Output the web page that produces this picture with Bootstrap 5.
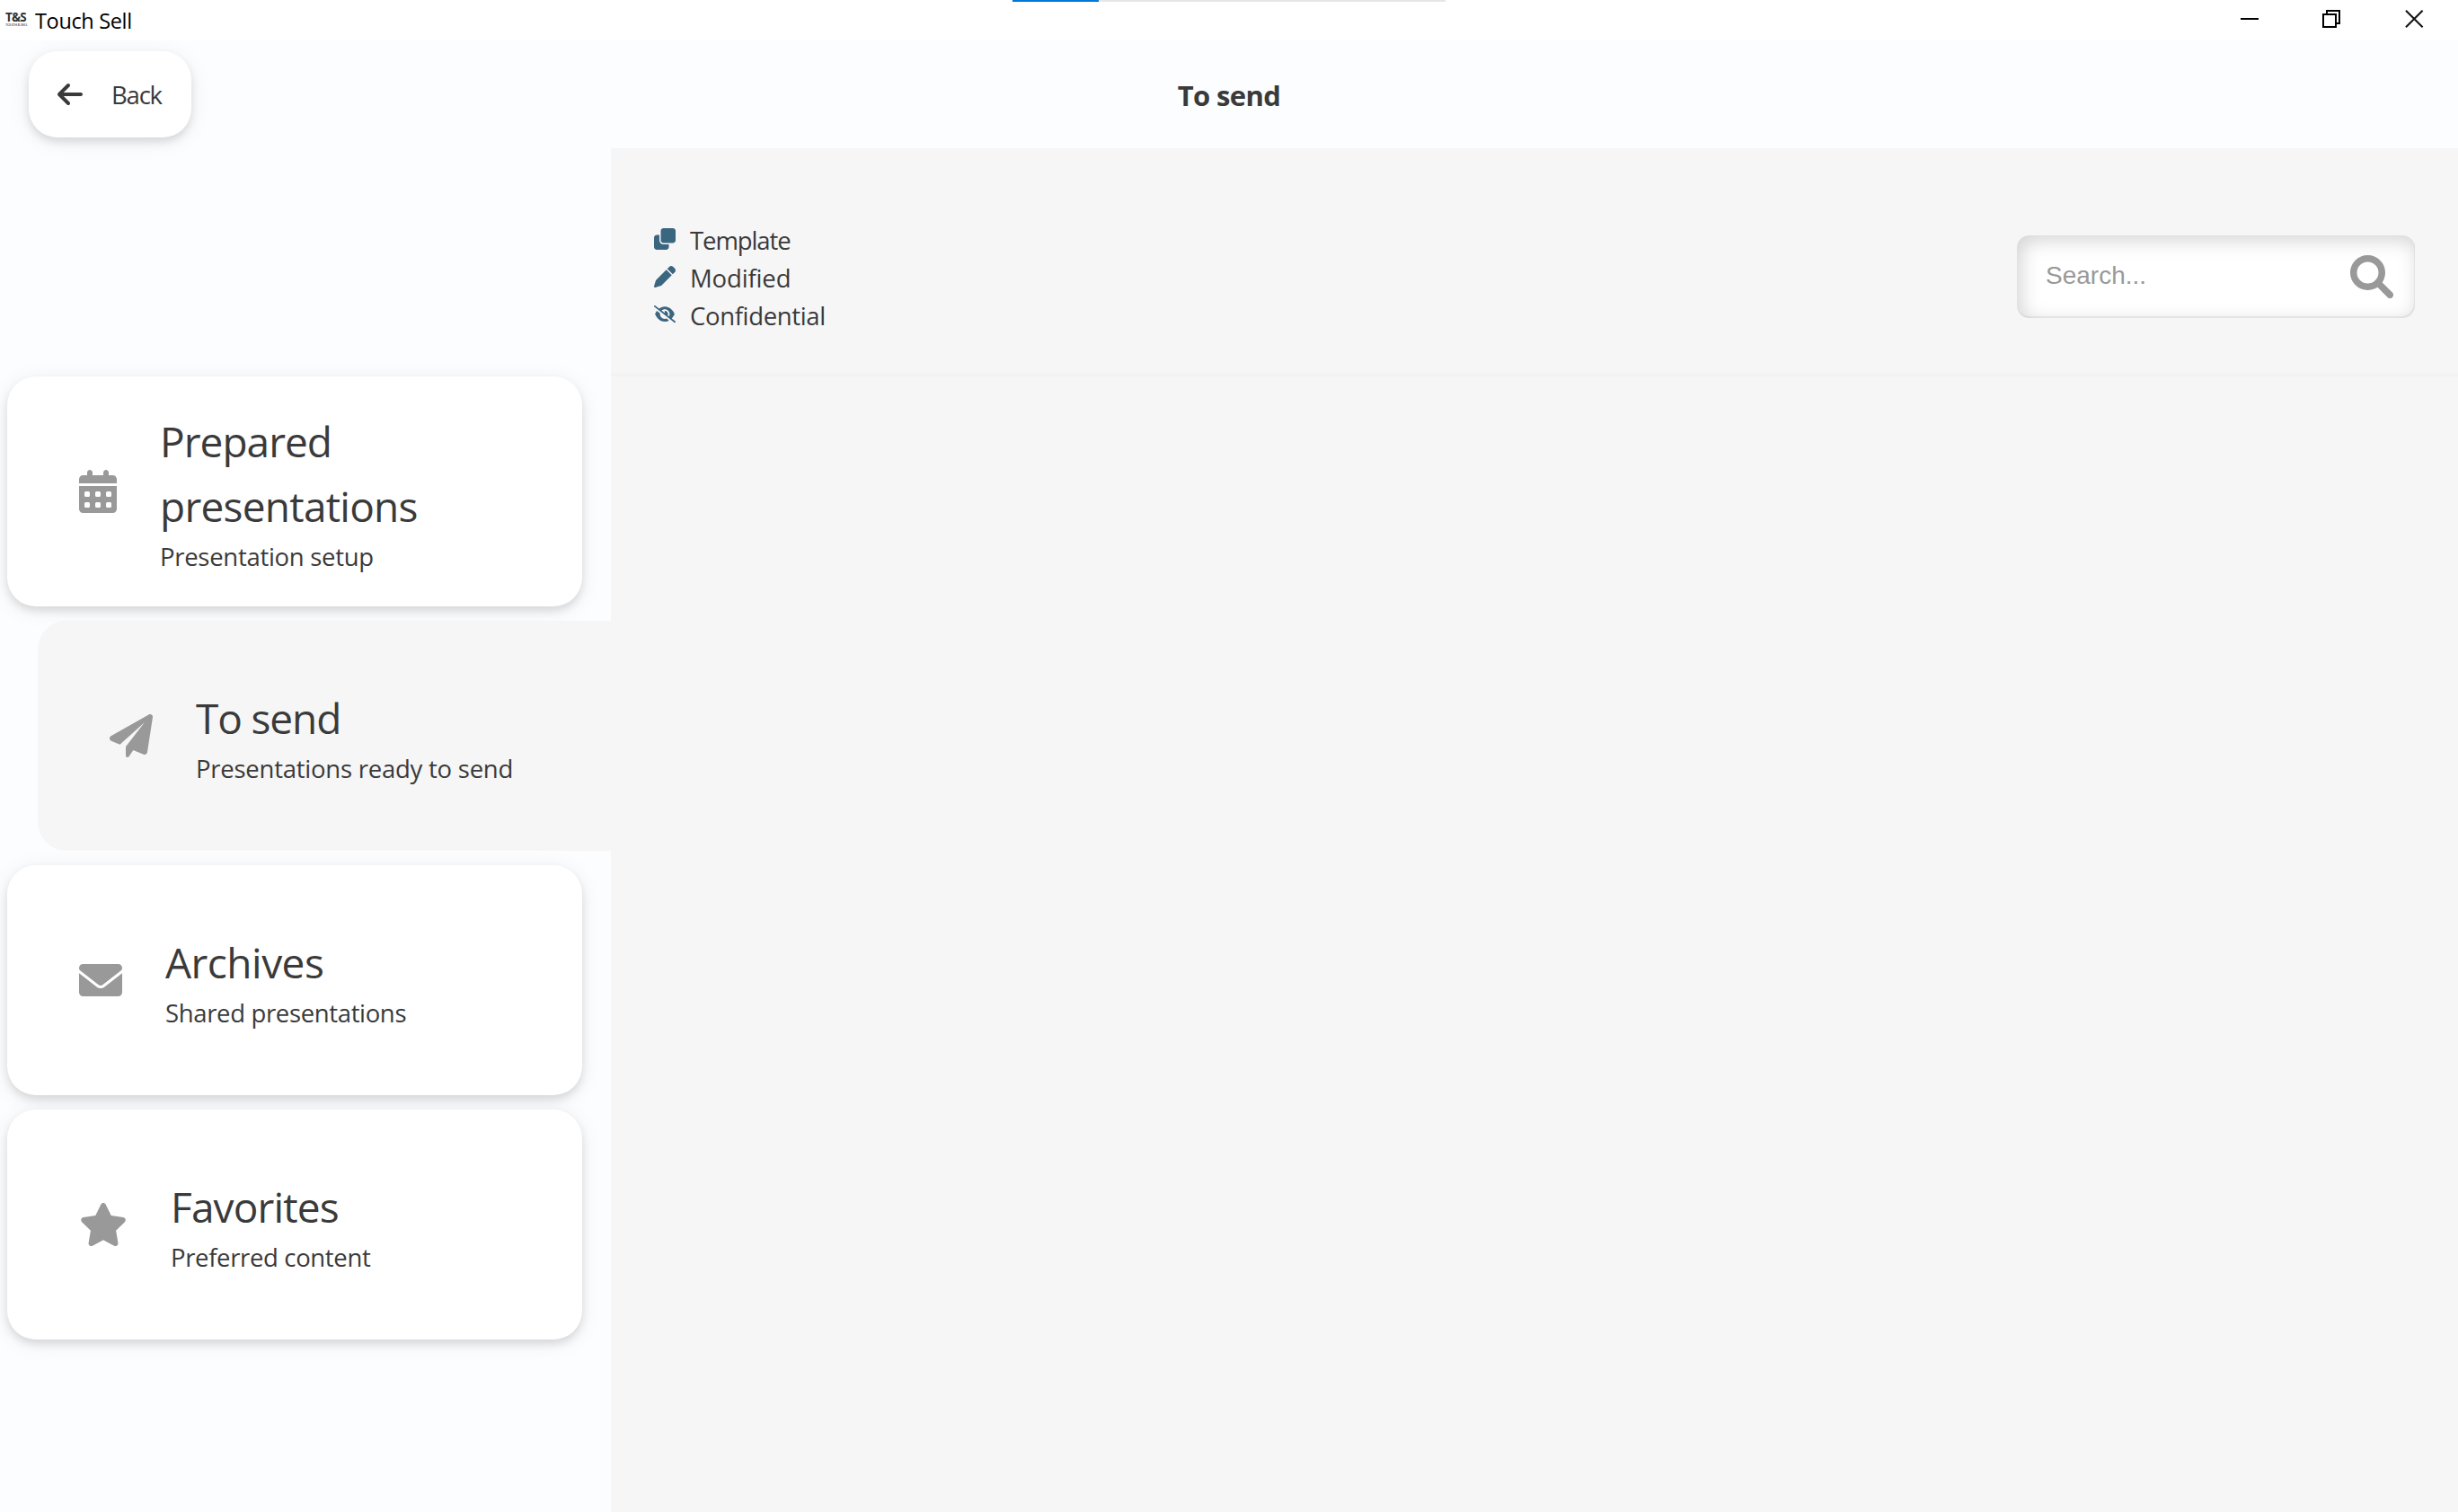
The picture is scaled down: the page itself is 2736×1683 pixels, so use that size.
<!DOCTYPE html>
<html lang="en">
<head>
<meta charset="utf-8">
<meta name="viewport" content="width=device-width, initial-scale=1">
<title>Touch Sell</title>
<link rel="stylesheet" href="https://cdn.jsdelivr.net/npm/bootstrap@5.3.0/dist/css/bootstrap.min.css">
<style>
  body { font-family: "Open Sans", "Noto Sans", sans-serif; font-size: 27.5px; line-height: 42px; color: #3a3a3a; background: #fcfdff; }
  svg { display: block; flex: none; fill: currentColor; }
  .titlebar { height: 45px; background: #fff; color: #000; }
  .app-logo { width: 24px; margin: 0 0 3px 6px; color: #333; }
  .logo-name { font-size: 13.4px; font-weight: 700; line-height: 14px; letter-spacing: -.8px; }
  .logo-tag { font-size: 4.2px; font-weight: 600; line-height: 4px; letter-spacing: -.36px; white-space: nowrap; color: #555; }
  .app-name { font-size: 23.5px; letter-spacing: -.35px; margin-left: 9px; line-height: 45px; padding-top: 2px; }
  .win-controls { gap: 71px; padding: 0 38px 3px 0; }
  .load-track { top: 0; left: 1127px; width: 482px; height: 2px; background: #e6e6e6; }
  .load-bar { width: 96px; height: 2px; background: #0078d7; }
  .topbar { height: 120px; padding: 12px 32px; display: grid; grid-template-columns: 1fr auto 1fr; }
  .soft-shadow { box-shadow: 0 5px 10px rgba(0,0,0,.11), 0 4px 24px rgba(0,0,0,.07); }
  .back-btn { width: 181px; height: 96px; border-radius: 32px; border: 0; background: #fff; color: #3a3a3a; padding: 0 0 0 32px; font-size: 27.5px; letter-spacing: -1.2px; }
  .back-btn span { margin-left: 32px; padding-top: 2px; }
  .page-title { font-size: 31px; font-weight: 700; letter-spacing: -.6px; line-height: 48px; margin-top: 25px; }
  .side { width: 680px; padding-top: 254px; gap: 16px; overflow: hidden; }
  .side-item { height: 256px; border-radius: 32px; background: #fff; margin: 0 32px 0 8px; padding-left: 80px; gap: 48px; color: #3a3a3a; text-decoration: none; flex: none; }
  .side-item.current { margin: 0 0 0 42px; border-radius: 32px 0 0 32px; background: #f6f6f6; }
  .side-item svg { color: #999; }
  .side-title { font-size: 46px; line-height: 72px; font-weight: 400; margin: 0; padding-top: 1px; letter-spacing: -.66px; }
  .work { background: #f6f6f6; }
  .toolbar { height: 254px; padding: 32px 48px 0; box-shadow: inset 0 -7px 7px -6px rgba(0,0,0,.04); }
  .legend-row { height: 42px; gap: 16px; }
  .legend-row span { padding-top: 3px; }
  .legend-row svg { color: #3b6680; width: 24px; }
  .finder { width: 443px; height: 92px; border-radius: 14px; padding: 0 24px 0 32px; background: #fff; box-shadow: inset -1px -2px 1px rgba(0,0,0,.06), inset 4px 5px 22px rgba(0,0,0,.18); }
  .finder input { font-family: "Liberation Sans", Arial, sans-serif; font-size: 28px; line-height: 34px; margin-bottom: 2px; }
  .finder input::placeholder { color: #999; opacity: 1; }
  .t-a { letter-spacing: -.97px; } .t-b { letter-spacing: -.75px; } .t-c { letter-spacing: -1.13px; } .t-d { letter-spacing: -.52px; } .t-e { letter-spacing: -.86px; }
  .s-a { letter-spacing: -.29px; } .s-b { letter-spacing: -.24px; } .s-c { letter-spacing: -.35px; } .s-d { letter-spacing: -1.1px; } .s-e { letter-spacing: -.15px; }
</style>
<script src="https://cdn.jsdelivr.net/npm/bootstrap@5.3.0/dist/js/bootstrap.bundle.min.js"></script>
</head>
<body class="vh-100 d-flex flex-column overflow-hidden">

<header class="titlebar d-flex align-items-center position-relative flex-shrink-0">
  <div class="app-logo">
    <div class="logo-name">T&amp;S</div>
    <div class="logo-tag">TOUCH &amp; SELL</div>
  </div>
  <div class="app-name">Touch Sell</div>
  <div class="win-controls d-flex ms-auto">
    <svg width="20" height="20" viewBox="0 0 20 20"><path d="M0 9h20v2H0z"/></svg>
    <svg width="20" height="20" viewBox="0 0 20 20" stroke="#000" stroke-width="2"><path fill="none" d="M1 5h14v14H1zM5 5V1h14v14h-4"/></svg>
    <svg width="22" height="20" viewBox="0 0 22 20" stroke="#111" stroke-width="2"><path d="M2 .7 20.600 19.300M20.600 .7 2 19.300"/></svg>
  </div>
  <div class="load-track position-absolute"><div class="load-bar"></div></div>
</header>

<div class="topbar flex-shrink-0">
  <button class="back-btn soft-shadow d-flex align-items-center" type="button">
    <svg width="28" height="32" viewBox="0 0 448 512"><path d="M9.4 233.4c-12.500 12.500-12.500 32.800 0 45.300l160 160c12.500 12.500 32.800 12.500 45.300 0s12.500-32.800 0-45.300L109.200 288 416 288c17.700 0 32-14.300 32-32s-14.300-32-32-32l-306.700 0L214.600 118.600c12.500-12.500 12.500-32.800 0-45.300s-32.800-12.500-45.300 0l-160 160z"/></svg>
    <span>Back</span>
  </button>
  <h1 class="page-title mb-0">To send</h1>
  <div></div>
</div>

<div class="d-flex flex-grow-1 overflow-hidden">
  <nav class="side d-flex flex-column flex-shrink-0">
    <a href="#" class="side-item soft-shadow d-flex align-items-center">
      <svg width="42" height="48" viewBox="0 0 448 512"><path fill-rule="evenodd" d="M96 32c0-17.700 14.300-32 32-32s32 14.300 32 32v32h128V32c0-17.700 14.300-32 32-32s32 14.300 32 32v32h48c26.500 0 48 21.500 48 48v48H0v-48c0-26.500 21.500-48 48-48h48zM0 192h448v272c0 26.500-21.500 48-48 48H48c-26.500 0-48-21.500-48-48zM64 272v32q0 16 16 16h32q16 0 16-16v-32q0-16-16-16H80q-16 0-16 16zm128 0v32q0 16 16 16h32q16 0 16-16v-32q0-16-16-16h-32q-16 0-16 16zm128 0v32q0 16 16 16h32q16 0 16-16v-32q0-16-16-16h-32q-16 0-16 16zM64 400v32q0 16 16 16h32q16 0 16-16v-32q0-16-16-16H80q-16 0-16 16zm128 0v32q0 16 16 16h32q16 0 16-16v-32q0-16-16-16h-32q-16 0-16 16zm128 0v32q0 16 16 16h32q16 0 16-16v-32q0-16-16-16h-32q-16 0-16 16z"/></svg>
      <div>
        <h2 class="side-title"><span class="t-a">Prepared</span><br><span class="t-b">presentations</span></h2>
        <div class="s-a">Presentation setup</div>
      </div>
    </a>
    <a href="#" class="side-item current d-flex align-items-center">
      <svg width="48" height="48" viewBox="0 0 512 512"><path d="M511.600 36.860l-64 415.100c-1.500 9.734-7.375 18.220-15.970 23.050c-4.844 2.719-10.270 4.097-15.680 4.097c-4.188 0-8.319-.8154-12.290-2.472l-122.600-51.100l-50.860 76.290C226.300 508.500 219.800 512 212.800 512C201.300 512 192 502.700 192 491.200v-96.180c0-7.115 2.372-14.030 6.742-19.640L416 96l-293.700 264.300L19.690 317.500C8.438 312.800 .8125 302.200 .0625 289.100s5.469-23.720 16.060-29.770l448-255.100c10.690-6.109 23.880-5.547 34 1.406S513.500 24.720 511.600 36.860z"/></svg>
      <div>
        <h2 class="side-title t-c">To send</h2>
        <div class="s-b">Presentations ready to send</div>
      </div>
    </a>
    <a href="#" class="side-item soft-shadow d-flex align-items-center">
      <svg width="48" height="48" viewBox="0 0 512 512"><path d="M256 352c-16.530 0-33.060-5.422-47.160-16.410L0 173.200V400C0 426.500 21.490 448 48 448h416c26.510 0 48-21.490 48-48V173.200l-208.800 162.500C289.100 346.600 272.500 352 256 352zM16.290 145.300l212.100 165.100c16.190 12.600 38.870 12.600 55.060 0l212.100-165.100C505.100 137.300 512 125 512 112C512 85.490 490.500 64 464 64h-416C21.490 64 0 85.490 0 112C0 125 6.010 137.300 16.290 145.300z"/></svg>
      <div>
        <h2 class="side-title t-d">Archives</h2>
        <div class="s-c">Shared presentations</div>
      </div>
    </a>
    <a href="#" class="side-item soft-shadow d-flex align-items-center">
      <svg width="54" height="48" viewBox="0 0 576 512"><path d="M316.900 18C311.600 7 300.400 0 288.100 0s-23.400 7-28.800 18L195 150.300 51.400 171.500c-12 1.800-22 10.200-25.700 21.700s-.7 24.200 7.900 32.700L137.800 329 113.200 474.700c-2 12 3 24.200 12.900 31.300s23 8 33.800 2.300l128.300-68.500 128.300 68.500c10.800 5.700 23.900 4.900 33.800-2.300s14.900-19.300 12.900-31.300L438.500 329 542.700 225.900c8.600-8.500 11.700-21.200 7.900-32.700s-13.700-19.900-25.700-21.700L381.200 150.300 316.900 18z"/></svg>
      <div>
        <h2 class="side-title t-e">Favorites</h2>
        <div class="s-c">Preferred content</div>
      </div>
    </a>
  </nav>

  <main class="work flex-grow-1">
    <div class="toolbar d-flex align-items-center justify-content-between">
      <div>
        <div class="legend-row d-flex align-items-center">
          <svg height="24" viewBox="0 0 512 512"><path d="M0 224C0 188.700 28.650 160 64 160H128V288C128 341 170.100 384 224 384H352V448C352 483.300 323.300 512 288 512H64C28.650 512 0 483.300 0 448V224zM224 352C188.700 352 160 323.300 160 288V64C160 28.650 188.700 0 224 0H448C483.300 0 512 28.650 512 64V288C512 323.300 483.300 352 448 352H224z"/></svg>
          <span class="s-d">Template</span>
        </div>
        <div class="legend-row d-flex align-items-center">
          <svg height="24" viewBox="0 0 512 512"><path d="M362.700 19.320C387.700-5.678 428.300-5.678 453.300 19.320L492.700 58.750C517.700 83.740 517.700 124.300 492.700 149.300L444.300 197.700L314.300 67.720L362.700 19.320zM421.700 220.300L188.500 453.400C178.100 463.800 165.200 471.500 151.100 475.600L30.770 511C22.350 513.500 13.240 511.200 7.030 504.100C.8198 498.800-1.502 489.700 .976 481.200L36.370 360.900C40.530 346.800 48.160 333.900 58.570 323.500L291.700 90.340L421.700 220.300z"/></svg>
          <span class="s-e">Modified</span>
        </div>
        <div class="legend-row d-flex align-items-center">
          <svg height="19.200" viewBox="0 0 640 512"><path d="M150.700 92.770C195 58.270 251.800 32 320 32C400.800 32 465.500 68.840 512.600 112.600C559.400 156 590.700 207.100 605.500 243.700C608.800 251.600 608.800 260.400 605.500 268.300C592.100 300.600 565.200 346.100 525.600 386.700L630.800 469.100C641.200 477.300 643.100 492.400 634.900 502.800C626.700 513.200 611.600 515.100 601.200 506.900L9.196 42.890C-1.236 34.710-3.065 19.630 5.112 9.196C13.290-1.236 28.370-3.065 38.810 5.112L150.700 92.770zM223.100 149.500L313.400 220.300C317.600 211.800 320 202.200 320 191.100C320 180.500 316.100 169.700 311.600 160.400C314.400 160.100 317.200 159.100 320 159.100C373 159.100 416 202.100 416 255.100C416 269.700 413.100 282.700 407.100 294.500L446.600 324.700C457.700 304.300 464 280.900 464 255.100C464 176.500 399.500 111.100 320 111.100C282.700 111.100 248.600 126.200 223.100 149.500zM320 480C239.200 480 174.500 443.200 127.400 399.400C80.620 355.100 49.340 304 34.460 268.300C31.180 260.400 31.180 251.600 34.460 243.700C44 220.800 60.290 191.200 83.090 161.500L177.400 235.800C176.500 242.400 176 249.100 176 255.100C176 335.500 240.500 400 320 400C338.700 400 356.600 396.400 373 389.900L446.200 447.500C409.900 467.100 367.800 480 320 480z"/></svg>
          <span class="s-c">Confidential</span>
        </div>
      </div>
      <div class="finder d-flex align-items-center">
        <input class="form-control border-0 bg-transparent shadow-none p-0" type="text" placeholder="Search..." aria-label="Search">
        <svg width="48" height="48" viewBox="0 0 512 512" stroke="#999" stroke-width="80" stroke-linecap="round"><circle fill="none" cx="208" cy="208" r="168"/><path d="M345 345 472 472"/></svg>
      </div>
    </div>
  </main>
</div>

</body>
</html>
